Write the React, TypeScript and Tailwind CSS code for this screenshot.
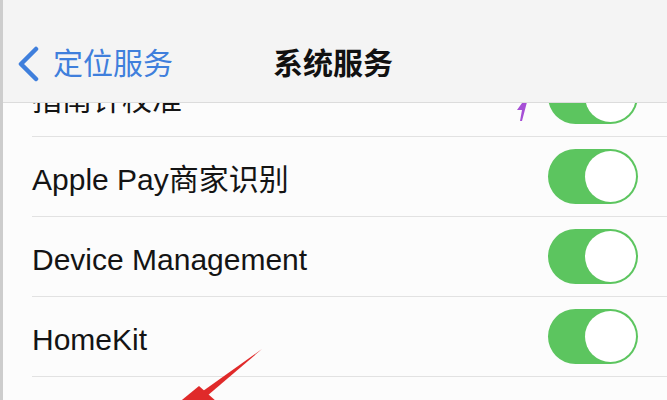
import React from "react";

const font = { fontFamily: '"Liberation Sans", "Noto Sans CJK SC", sans-serif' };

function Toggle() {
  return (
    <div className="relative h-[55px] w-[90px] shrink-0 rounded-full bg-[#5cc55f]">
      <div className="absolute right-[2px] top-[2px] h-[51px] w-[51px] rounded-full bg-white" />
    </div>
  );
}

function Row({ label, extra }: { label: string; extra?: React.ReactNode }) {
  return (
    <div className="flex h-[80px] items-center border-b border-[#e2e2e2] pr-[29px]">
      <span className="flex-1 pt-[7px] text-[30px] leading-none text-[#141414]">{label}</span>
      {extra}
      <Toggle />
    </div>
  );
}

export default function App() {
  return (
    <div
      className="relative h-[400px] w-[667px] overflow-hidden border-l-[3px] border-[#cdcdcd] bg-[#fcfcfc]"
      style={font}
    >
      <div className="pl-[29px] pt-[57px]">
        <Row
          label="指南针校准"
          extra={
            <svg width="14" height="30" viewBox="0 0 14 30" className="mr-[20px] mt-[24px]">
              <path d="M13 2 L3 16 L8 16 L6 27 L8 27 L13 8 Z" fill="#a64fd6" />
            </svg>
          }
        />
        <Row label="Apple Pay商家识别" />
        <Row label="Device Management" />
        <Row label="HomeKit" />
      </div>

      <div className="absolute left-0 right-0 top-0 flex h-[103px] items-center border-b border-[#dcdcdc] bg-[#f4f4f4] pt-[26px]">
        <div className="flex items-center pl-[14px]">
          <svg width="24" height="36" viewBox="0 0 24 36">
            <path d="M19 3 L4 18 L19 33" fill="none" stroke="#3f7fdc" strokeWidth="4.5" strokeLinecap="round" strokeLinejoin="round" />
          </svg>
          <span className="ml-[12px] text-[30px] leading-none text-[#3f7fdc]">定位服务</span>
        </div>
        <span className="ml-[100px] text-[30px] font-bold leading-none text-[#111]">系统服务</span>
      </div>

      <svg className="absolute left-0 top-0" width="667" height="400" viewBox="0 0 667 400">
        <polygon points="259,349 200,391 204,396" fill="#e02a2a" />
        <polygon points="196,386 174,404 214,402" fill="#e02a2a" />
      </svg>
    </div>
  );
}
